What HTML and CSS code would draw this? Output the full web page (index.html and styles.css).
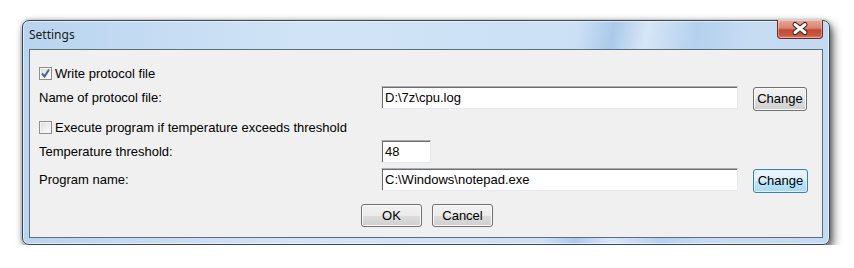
FILE: index.html
```html
<!DOCTYPE html>
<html>
<head>
    <title>Settings</title>
    <link rel="stylesheet" href="styles.css">
</head>
<body>

<div class="window">
    <div class="titlebar">
        <span class="title">Settings</span>
        <span class="close">
            <svg width="44" height="17" viewBox="0 0 44 17">
                <path d="M17 4.5 L27 12.5 M27 4.5 L17 12.5" stroke="#3b1d18" stroke-width="5" stroke-linecap="round" fill="none"/>
                <path d="M17 4.5 L27 12.5 M27 4.5 L17 12.5" stroke="#ffffff" stroke-width="3" stroke-linecap="round" fill="none"/>
            </svg>
        </span>
    </div>

    <div class="client">
        <!-- Протокол -->
        <div class="row row-a">
            <span class="check">
                <svg width="11" height="11" viewBox="0 0 11 11">
                    <path d="M2 5.5 L4.5 8.5 L9 1.5" stroke="#4c5f8f" stroke-width="2" fill="none"/>
                </svg>
            </span>
            <span>Write protocol file</span>
        </div>
        <div class="row row-b">
            <span class="label">Name of protocol file:</span>
            <span class="edit wide">D:\7z\cpu.log</span>
            <span class="btn change">Change</span>
        </div>

        <!-- Запуск программы -->
        <div class="row row-c">
            <span class="check"></span>
            <span>Execute program if temperature exceeds threshold</span>
        </div>
        <div class="row row-d">
            <span class="label">Temperature threshold:</span>
            <span class="edit small">48</span>
        </div>
        <div class="row row-e">
            <span class="label">Program name:</span>
            <span class="edit wide">C:\Windows\notepad.exe</span>
            <span class="btn change focused">Change</span>
        </div>

        <div class="buttons">
            <span class="btn dlg">OK</span>
            <span class="btn dlg">Cancel</span>
        </div>
    </div>
</div>

</body>
</html>
```

FILE: styles.css
```css
body {
    margin: 0;
    padding: 20px 0 0 22px;
    background: #fff;
    overflow: hidden;
}
.window {
    width: 808px;
    height: 225px;
    box-sizing: border-box;
    border: 1px solid #3a4654;
    border-radius: 7px;
    padding: 0 6px 6px;
    background:
        linear-gradient(100deg, rgba(255,255,255,0) 66%, rgba(140,180,225,0.5) 70%, rgba(255,255,255,0.25) 74%, rgba(150,190,230,0.4) 80%, rgba(255,255,255,0) 86%),
        linear-gradient(90deg, #b9d4ef 0%, #d1e4f7 35%, #cde1f6 60%, #c3daf2 100%);
    box-shadow: 3px 5px 10px rgba(0,0,0,0.65), 0 0 4px rgba(0,0,0,0.3), inset 0 0 0 1px rgba(255,255,255,0.55);
}
.titlebar {
    height: 28px;
    display: flex;
    justify-content: space-between;
    align-items: flex-start;
}
.title {
    font-family: "Noto Sans", sans-serif;
    font-size: 12px;
    line-height: 16px;
    color: #1b1b1b;
    padding-top: 6px;
}
.close {
    width: 46px;
    height: 19px;
    box-sizing: border-box;
    margin-top: -1px;
    border: 1px solid #6e2a20;
    border-top: none;
    border-radius: 0 0 4px 4px;
    background: linear-gradient(#e9a898 0%, #d88370 45%, #c04a34 55%, #c9583e 85%, #d8866d 100%);
    box-shadow: inset 0 0 0 1px rgba(255,255,255,0.35);
    display: flex;
}
.client {
    height: 189px;
    box-sizing: border-box;
    border: 1px solid #5d6d80;
    background: #f0f0f0;
    padding: 12px 0 0 9px;
    font-family: "Liberation Sans", Arial, sans-serif;
    font-size: 13px;
    color: #000;
}
.row {
    display: flex;
    align-items: center;
}
.row-a { height: 23px; }
.row-b { height: 25px; margin-top: 1px; align-items: flex-start; }
.row-c { height: 24px; margin-top: 4px; }
.row-d { height: 23px; margin-top: 1px; }
.row-e { height: 25px; margin-top: 5px; align-items: flex-start; }
.row-b .label, .row-e .label {
    line-height: 23px;
}
.label {
    width: 342px;
}
.check {
    width: 13px;
    height: 13px;
    box-sizing: border-box;
    border: 1px solid #8e8f8f;
    background: linear-gradient(135deg, #dcdcdc, #fefefe);
    box-shadow: inset 0 0 0 1px #f4f4f4;
    margin-right: 3px;
    display: flex;
    align-items: center;
    justify-content: center;
}
.edit {
    height: 23px;
    box-sizing: border-box;
    background: #fff;
    border: 1px solid #e3e9ef;
    border-top-color: #abadb3;
    box-shadow: inset 1px 1px 0 #6d6d6d;
    padding: 0 3px;
    line-height: 21px;
}
.wide { width: 357px; }
.small { width: 50px; }
.btn {
    box-sizing: border-box;
    border: 1px solid #707070;
    border-radius: 3px;
    background: linear-gradient(#f2f2f2 0%, #ebebeb 50%, #dddddd 51%, #cfcfcf 100%);
    box-shadow: inset 0 0 0 1px #fbfbfb;
    text-align: center;
    color: #000;
}
.change {
    width: 54px;
    height: 24px;
    line-height: 22px;
    margin: 1px 0 0 15px;
}
.focused {
    width: 55px;
    border-color: #3c7fb1;
    background: linear-gradient(#eaf6fd 0%, #d9f0fc 50%, #bee6fd 51%, #a7d9f5 100%);
    box-shadow: inset 0 0 0 1px #dff2fc;
}
.buttons {
    display: flex;
    justify-content: center;
    gap: 10px;
    margin-top: 11px;
    padding-right: 7px;
}
.dlg {
    width: 61px;
    height: 23px;
    line-height: 21px;
}
```
